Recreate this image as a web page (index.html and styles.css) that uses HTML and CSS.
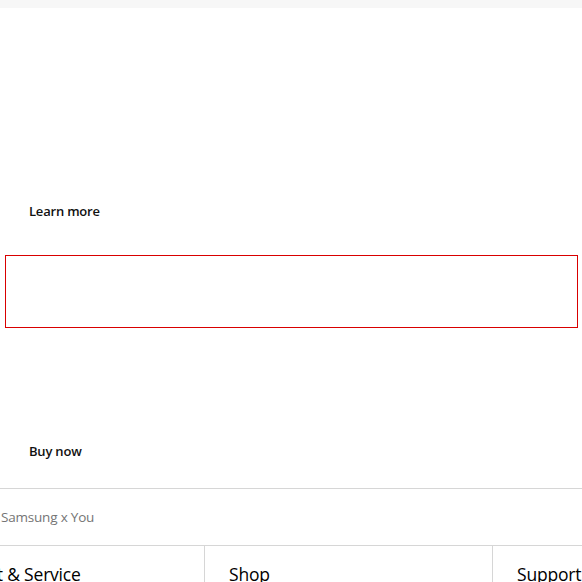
FILE: index.html
```html
<!DOCTYPE html>
<html lang="en">
<head>
<meta charset="utf-8">
<title>Samsung</title>
<link rel="stylesheet" href="styles.css">
</head>
<body>
<div class="topbar"></div>
<section class="promo promo-first">
  <a class="cta" href="#">Learn more</a>
</section>
<div class="box-wrap"><div class="box"></div></div>
<section class="promo promo-second">
  <a class="cta" href="#">Buy now</a>
</section>
<div class="sxy"><span>Samsung x You</span></div>
<nav class="footer">
  <div class="col"><h3>Product &amp; Service</h3></div>
  <div class="col"><h3>Shop</h3></div>
  <div class="col"><h3>Support</h3></div>
</nav>
</body>
</html>
```

FILE: styles.css
```css
html, body {
  margin: 0;
  padding: 0;
  background: #fff;
  overflow: hidden;
  font-family: "Open Sans", "Noto Sans", Arial, sans-serif;
  color: #000;
}
.topbar {
  height: 8px;
  background: #f7f7f7;
}
.promo {
  display: flex;
  align-items: flex-end;
  padding-left: 29px;
  box-sizing: border-box;
}
.promo-first {
  height: 247px;
  padding-bottom: 35px;
}
.promo-second {
  height: 160px;
  padding-bottom: 28px;
}
.cta {
  font-size: 13px;
  font-weight: 600;
  letter-spacing: -0.2px;
  color: #111;
  text-decoration: none;
  line-height: 18px;
}
.box-wrap {
  padding: 0 4px 0 5px;
}
.box {
  height: 71px;
  border: 1px solid #d90000;
}
.sxy {
  border-top: 1px solid #d6d6d6;
  border-bottom: 1px solid #d6d6d6;
  height: 56px;
  display: flex;
  align-items: center;
  padding-left: 1px;
  font-size: 13.5px;
  color: #757575;
  letter-spacing: -0.2px;
}
.footer {
  display: grid;
  grid-template-columns: 288px 288px 288px;
  margin-left: -84px;
  width: 864px;
}
.col {
  border-left: 1px solid #d6d6d6;
  padding: 16px 24px 20px;
  min-height: 60px;
}
.col:first-child {
  border-left: none;
}
.col h3 {
  margin: 0;
  font-size: 17.5px;
  font-weight: 400;
  line-height: 24px;
  letter-spacing: -0.2px;
  white-space: nowrap;
}
```
